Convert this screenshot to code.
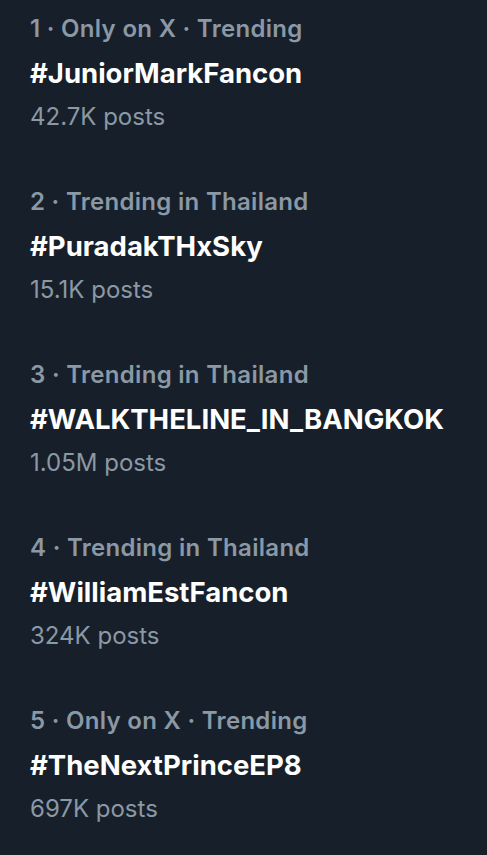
const trends = [
  { rank: 1, context: 'Only on X · Trending', tag: '#JuniorMarkFancon', posts: '42.7K posts' },
  { rank: 2, context: 'Trending in Thailand', tag: '#PuradakTHxSky', posts: '15.1K posts' },
  { rank: 3, context: 'Trending in Thailand', tag: '#WALKTHELINE_IN_BANGKOK', posts: '1.05M posts' },
  { rank: 4, context: 'Trending in Thailand', tag: '#WilliamEstFancon', posts: '324K posts' },
  { rank: 5, context: 'Only on X · Trending', tag: '#TheNextPrinceEP8', posts: '697K posts' },
]

const TrendRow = ({ trend }) => (
  <div className="h-[173px] px-[30px]">
    <p className="text-[24px] leading-[44px] font-semibold tracking-[0.3px] text-[#8b98a5]">
      {trend.rank} · {trend.context}
    </p>
    <p className="text-[27.5px] leading-[44px] font-bold text-white">{trend.tag}</p>
    <p className="text-[24px] leading-[44px] text-[#8b98a5]">{trend.posts}</p>
  </div>
)

const App = () => {
  return (
    <div
      className="min-h-[855px] w-[487px] bg-[#17202a] pt-[7px] overflow-hidden"
      style={{ fontFamily: 'Inter, "Noto Sans", sans-serif' }}
    >
      {trends.map((t) => (
        <TrendRow key={t.rank} trend={t} />
      ))}
    </div>
  )
}

export default App
